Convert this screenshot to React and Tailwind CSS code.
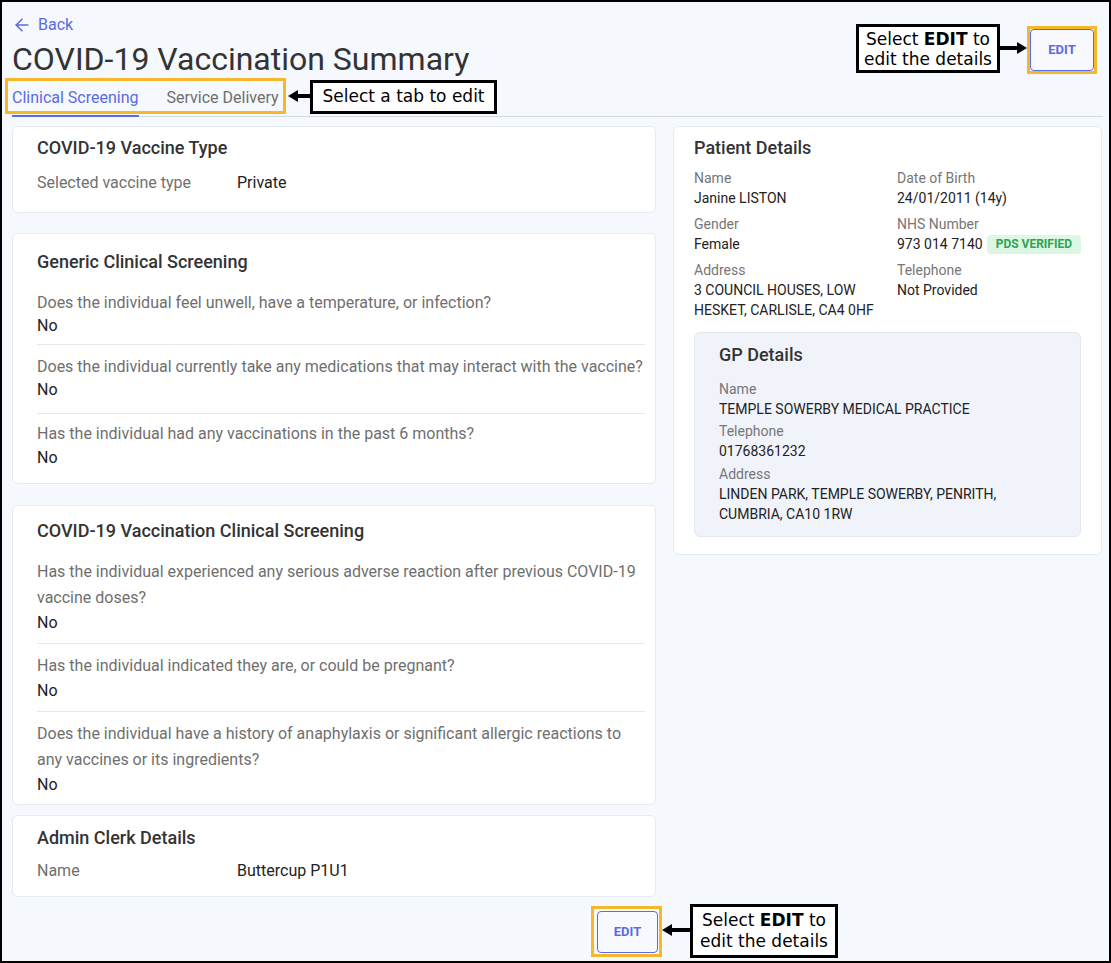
import React from "react";
import { ArrowLeft } from "lucide-react";

const Card = ({ className = "", children }) => (
  <div className={"bg-white border border-[#e6eaf2] rounded-md " + className}>{children}</div>
);

const QA = ({ q, a, pad = "", divider = true, qLead = "leading-[26px]", aGap = "mt-px" }) => (
  <div className={pad + (divider ? " border-b border-[#e3e8f0]" : "")}>
    <div className={"text-[16px] text-[#6f6f6f] " + qLead}>{q}</div>
    <div className={"text-[16px] leading-[22px] text-[#222] " + aGap}>{a}</div>
  </div>
);

const ArrowSvg = ({ dir = "left", w = 24 }) => (
  <svg width={w} height="20" viewBox={`0 0 ${w} 20`}>
    {dir === "left" ? (
      <>
        <polygon points="0,10 10,4 10,16" fill="#000" />
        <rect x="9" y="8" width={w - 9} height="4" fill="#000" />
      </>
    ) : (
      <>
        <polygon points={`${w},10 ${w - 10},4 ${w - 10},16`} fill="#000" />
        <rect x="0" y="8" width={w - 9} height="4" fill="#000" />
      </>
    )}
  </svg>
);

const Field = ({ label, children, className = "" }) => (
  <div className={className}>
    <div className="text-[14px] leading-[20px] text-[#767676]">{label}</div>
    <div className="text-[14px] leading-[20px] text-[#222]">{children}</div>
  </div>
);

export default function App() {
  const callout = { fontFamily: '"DejaVu Sans", sans-serif' };
  return (
    <div
      className="w-[1111px] h-[963px] border-2 border-black bg-[#f5f8fd] relative overflow-hidden"
      style={{ fontFamily: 'Roboto, "Noto Sans", sans-serif' }}
    >
      <div className="pl-[10px] pr-[6px]">
        {/* Header */}
        <div className="flex justify-between">
          <div>
            <div className="pt-[11px] flex items-center gap-[6px] text-[16px] leading-[24px] text-[#5b6be0]">
              <ArrowLeft size={20} strokeWidth={1.8} />
              <span>Back</span>
            </div>
            <h1 className="mt-[4px] text-[32px] leading-[36px] text-[#333]">COVID-19 Vaccination Summary</h1>
          </div>
          <button className="mt-[27px] mr-[9px] w-[64px] h-[42px] border border-[#5b6be0] rounded bg-[#f7f9fe] text-[#5b6be0] font-bold text-[13px]">
            EDIT
          </button>
        </div>

        {/* Tabs */}
        <div className="flex gap-[28px] border-b border-[#d6d9df]">
          <div className="-mb-px pt-[9px] pb-[5px] border-b-2 border-[#5b6be0] text-[16px] leading-[24px] text-[#5b6be0]">
            Clinical Screening
          </div>
          <div className="-mb-px pt-[9px] pb-[5px] border-b-2 border-transparent text-[16px] leading-[24px] text-[#6f6f6f]">
            Service Delivery
          </div>
        </div>

        {/* Main */}
        <div className="mt-[9px] grid grid-cols-[644px_429px] gap-x-[17px] items-start">
          <div className="flex flex-col">
            <Card className="pt-[9px] pb-[18px] pl-[24px] pr-[10px]">
              <div className="text-[18px] leading-[24px] font-medium text-[#333]">COVID-19 Vaccine Type</div>
              <div className="mt-[12px] flex text-[16px] leading-[22px]">
                <div className="w-[200px] text-[#6f6f6f]">Selected vaccine type</div>
                <div className="text-[#222]">Private</div>
              </div>
            </Card>

            <Card className="mt-[20px] pt-[16px] pb-[14px] pl-[24px] pr-[10px]">
              <div className="text-[18px] leading-[24px] font-medium text-[#333]">Generic Clinical Screening</div>
              <div className="mt-[17px]">
                <QA qLead="leading-[24px]" aGap="mt-0" pad="pb-[7px]" q="Does the individual feel unwell, have a temperature, or infection?" a="No" />
                <QA qLead="leading-[24px]" aGap="mt-0" pad="pt-[10px] pb-[12px]" q="Does the individual currently take any medications that may interact with the vaccine?" a="No" />
                <QA qLead="leading-[24px]" aGap="mt-px" pad="pt-[8px]" divider={false} q="Has the individual had any vaccinations in the past 6 months?" a="No" />
              </div>
            </Card>

            <Card className="mt-[21px] pt-[13px] pb-[8px] pl-[24px] pr-[10px]">
              <div className="text-[18px] leading-[24px] font-medium text-[#333]">COVID-19 Vaccination Clinical Screening</div>
              <div className="mt-[16px]">
                <QA pad="pb-[9px]" q="Has the individual experienced any serious adverse reaction after previous COVID-19 vaccine doses?" a="No" />
                <QA pad="pt-[9px] pb-[9px]" q="Has the individual indicated they are, or could be pregnant?" a="No" />
                <QA pad="pt-[9px]" divider={false} q="Does the individual have a history of anaphylaxis or significant allergic reactions to any vaccines or its ingredients?" a="No" />
              </div>
            </Card>

            <Card className="mt-[10px] pt-[10px] pb-[14px] pl-[24px] pr-[10px]">
              <div className="text-[18px] leading-[24px] font-medium text-[#333]">Admin Clerk Details</div>
              <div className="mt-[10px] flex text-[16px] leading-[22px]">
                <div className="w-[200px] text-[#6f6f6f]">Name</div>
                <div className="text-[#222]">Buttercup P1U1</div>
              </div>
            </Card>
          </div>

          <Card className="pt-[9px] pb-[17px] px-[20px]">
            <div className="text-[18px] leading-[24px] font-medium text-[#333]">Patient Details</div>
            <div className="mt-[8px] grid grid-cols-[203px_1fr] gap-y-[6px]">
              <Field label="Name">Janine LISTON</Field>
              <Field label="Date of Birth">24/01/2011 (14y)</Field>
              <Field label="Gender">Female</Field>
              <div>
                <div className="text-[14px] leading-[20px] text-[#767676]">NHS Number</div>
                <div className="flex items-center gap-[4px] text-[14px] leading-[20px] text-[#222]">
                  <span>973 014 7140</span>
                  <span className="inline-flex items-center h-[19px] px-[9px] rounded bg-[#dcf7e4] text-[#2ea44f] text-[12px] font-bold">
                    PDS VERIFIED
                  </span>
                </div>
              </div>
              <Field label="Address">
                3 COUNCIL HOUSES, LOW
                <br />
                HESKET, CARLISLE, CA4 0HF
              </Field>
              <Field label="Telephone">Not Provided</Field>
            </div>

            <div className="mt-[12px] bg-[#f1f3fb] border border-[#e3e7f0] rounded-md pt-[10px] pb-[12px] pl-[24px] pr-[16px]">
              <div className="text-[18px] leading-[24px] font-medium text-[#333]">GP Details</div>
              <Field label="Name" className="mt-[12px]">TEMPLE SOWERBY MEDICAL PRACTICE</Field>
              <Field label="Telephone" className="mt-[2px]">01768361232</Field>
              <Field label="Address" className="mt-[3px]">
                LINDEN PARK, TEMPLE SOWERBY, PENRITH,
                <br />
                CUMBRIA, CA10 1RW
              </Field>
            </div>
          </Card>
        </div>

        {/* Footer */}
        <div className="mt-[14px] pl-[585px]">
          <button className="w-[61px] h-[42px] border border-[#5b6be0] rounded bg-[#f7f9fe] text-[#5b6be0] font-bold text-[13px]">
            EDIT
          </button>
        </div>
      </div>

      {/* Annotations */}
      <div className="absolute left-[3px] top-[76px] w-[281px] h-[36px] border-[3px] border-[#f5b82a]" />
      <div className="absolute left-[286px] top-[84px]"><ArrowSvg dir="left" w={24} /></div>
      <div
        className="absolute left-[308px] top-[78px] w-[187px] h-[34px] border-[3px] border-black bg-white flex items-center justify-center text-[17px] text-black"
        style={callout}
      >
        Select a tab to edit
      </div>

      <div className="absolute left-[1025px] top-[24px] w-[70px] h-[48px] border-[3px] border-[#f5b82a]" />
      <div className="absolute left-[998px] top-[36px]"><ArrowSvg dir="right" w={27} /></div>
      <div
        className="absolute left-[854px] top-[22px] w-[144px] h-[49px] border-[3px] border-black bg-white flex flex-col items-center justify-center text-[17px] leading-[20px] text-black"
        style={callout}
      >
        <div>Select <b>EDIT</b> to</div>
        <div>edit the details</div>
      </div>

      <div className="absolute left-[589px] top-[904px] w-[71px] h-[51px] border-[3px] border-[#f5b82a]" />
      <div className="absolute left-[660px] top-[918px]"><ArrowSvg dir="left" w={28} /></div>
      <div
        className="absolute left-[688px] top-[902px] w-[148px] h-[54px] border-[3px] border-black bg-white flex flex-col items-center justify-center text-[17px] leading-[21px] text-black"
        style={callout}
      >
        <div>Select <b>EDIT</b> to</div>
        <div>edit the details</div>
      </div>
    </div>
  );
}
